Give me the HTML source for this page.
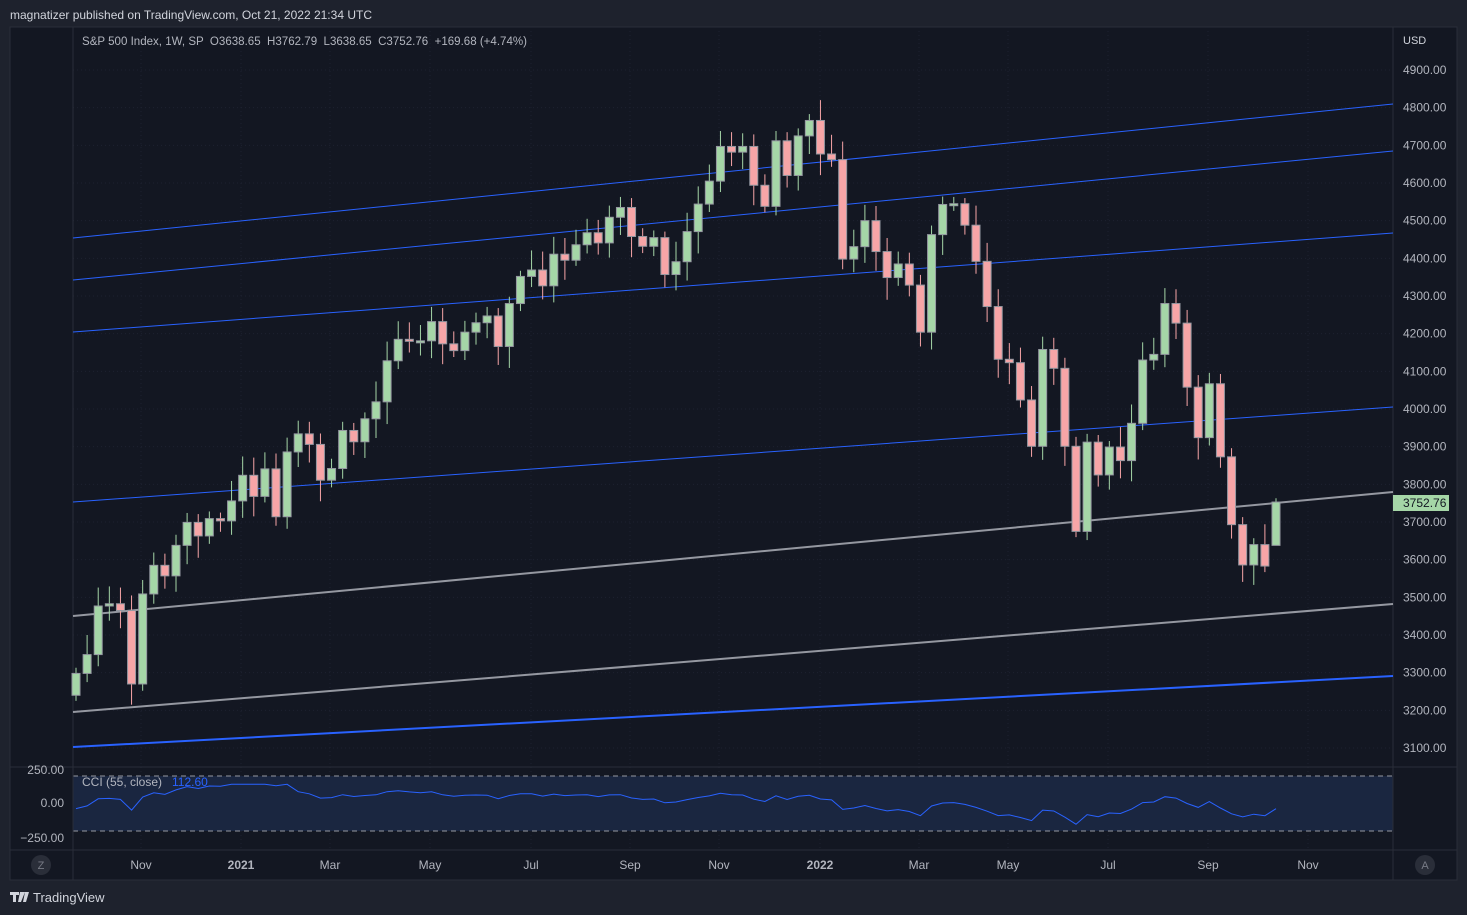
<!DOCTYPE html>
<html><head><meta charset="utf-8"><style>
html,body{margin:0;padding:0;background:#1e222d;width:1467px;height:915px;overflow:hidden;font-family:"Liberation Sans",sans-serif;}
svg{position:absolute;left:0;top:0}
</style></head><body>
<svg id="s" width="1467" height="915" xmlns="http://www.w3.org/2000/svg" font-family="Liberation Sans, sans-serif">
<rect x="0" y="0" width="1467" height="915" fill="#1e222d"/>
<text x="10" y="19" font-size="12" fill="#d1d4dc">magnatizer published on TradingView.com, Oct 21, 2022 21:34 UTC</text>
<rect x="10" y="27" width="1447" height="853" fill="#131722" stroke="#2a2e39"/>
<g id="grid"></g>
<rect x="73" y="776" width="1320" height="55" fill="#1a2640"/>
<line x1="73" y1="776" x2="1393" y2="776" stroke="#9598a1" stroke-dasharray="5,4" stroke-width="1"/>
<line x1="73" y1="831" x2="1393" y2="831" stroke="#9598a1" stroke-dasharray="5,4" stroke-width="1"/>
<line x1="73" y1="27" x2="73" y2="880" stroke="#2a2e39"/>
<line x1="1393" y1="27" x2="1393" y2="880" stroke="#2a2e39"/>
<line x1="10" y1="767" x2="1457" y2="767" stroke="#2a2e39"/>
<line x1="10" y1="850" x2="1457" y2="850" stroke="#2a2e39"/>
<g stroke-width="1">
<line x1="73" y1="238" x2="1393" y2="104" stroke="#2962ff"/>
<line x1="73" y1="280" x2="1393" y2="151" stroke="#2962ff"/>
<line x1="73" y1="332" x2="1393" y2="233" stroke="#2962ff"/>
<line x1="73" y1="502" x2="1393" y2="407" stroke="#2962ff"/>
<line x1="73" y1="616" x2="1393" y2="492" stroke="#9598a1" stroke-width="2"/>
<line x1="73" y1="712" x2="1393" y2="604" stroke="#9598a1" stroke-width="2"/>
<line x1="73" y1="747" x2="1393" y2="676" stroke="#2962ff" stroke-width="2"/>
</g>
<g id="candles"></g>
<polyline id="cci" fill="none" stroke="#2962ff" stroke-width="1"/>
<text x="82" y="45" font-size="11.5" fill="#b2b5be" xml:space="preserve" textLength="445" lengthAdjust="spacingAndGlyphs">S&amp;P 500 Index, 1W, SP  O3638.65  H3762.79  L3638.65  C3752.76  +169.68 (+4.74%)</text>
<text x="1403" y="44" font-size="11" fill="#d1d4dc">USD</text>
<g id="axis" font-size="12" fill="#b2b5be"></g>
<rect x="1393" y="495" width="56" height="16" fill="#a5d6a7"/>
<text x="1403" y="507" font-size="12" fill="#131722">3752.76</text>
<text x="82" y="786" font-size="12" fill="#b2b5be">CCI (55, close)</text>
<text x="172" y="786" font-size="12" fill="#2962ff">112.60</text>
<text x="64" y="774" font-size="12" fill="#b2b5be" text-anchor="end">250.00</text>
<text x="64" y="807" font-size="12" fill="#b2b5be" text-anchor="end">0.00</text>
<text x="64" y="842" font-size="12" fill="#b2b5be" text-anchor="end">−250.00</text>
<circle cx="41" cy="865" r="10" fill="#2a2e39"/><text x="41" y="869" font-size="11" fill="#787b86" text-anchor="middle">Z</text>
<circle cx="1425" cy="865" r="10" fill="#2a2e39"/><text x="1425" y="869" font-size="11" fill="#787b86" text-anchor="middle">A</text>
<g id="time" font-size="12" fill="#b2b5be" text-anchor="middle"></g>
<path d="M10 892h9v3h-3v7h-3v-7h-3z M20 892h5l-4 10h-3z M25 892h4l-3 10h-3z" fill="#d1d4dc"/>
<text x="33" y="902" font-size="13" fill="#d1d4dc">TradingView</text>
</svg>
<script>
var NS="http://www.w3.org/2000/svg";
function el(p,t,a,txt){var e=document.createElementNS(NS,t);for(var k in a)e.setAttribute(k,a[k]);if(txt!=null)e.textContent=txt;document.getElementById(p).appendChild(e);return e;}
function Y(p){return 70+(4900-p)*0.37667;}
for(var p=3100;p<=4900;p+=100){var y=Y(p);el('grid','line',{x1:73,y1:y,x2:1393,y2:y,stroke:'#1e2230','stroke-dasharray':'1,3'});el('axis','text',{x:1403,y:y+4},p.toFixed(2));}
var tl=[[141,'Nov'],[241,'2021'],[330,'Mar'],[430,'May'],[531,'Jul'],[630,'Sep'],[719,'Nov'],[820,'2022'],[919,'Mar'],[1008,'May'],[1108,'Jul'],[1208,'Sep'],[1308,'Nov']];
tl.forEach(function(t){el('grid','line',{x1:t[0],y1:27,x2:t[0],y2:850,stroke:'#1e2230','stroke-dasharray':'1,3'});el('time','text',{x:t[0],y:869,'font-weight':(t[1]=='2021'||t[1]=='2022')?'bold':'normal'},t[1]);});
var c=[3298,3348,3477,3483,3465,3270,3509,3585,3557,3638,3699,3663,3709,3703,3756,3824,3768,3841,3714,3886,3934,3906,3811,3842,3943,3913,3974,4019,4128,4185,4180,4181,4232,4173,4155,4204,4229,4247,4166,4280,4352,4369,4327,4411,4395,4436,4468,4441,4509,4535,4458,4432,4455,4357,4391,4471,4544,4605,4697,4682,4697,4594,4538,4712,4620,4725,4766,4677,4662,4398,4431,4500,4418,4349,4385,4329,4204,4463,4543,4545,4488,4392,4272,4132,4123,4024,3901,4158,4108,3901,3675,3912,3825,3899,3863,3962,4130,4145,4280,4228,4058,3924,4067,3873,3693,3586,3640,3583,3753];
var n=c.length,s=(1276-76)/(n-1),prev=3240,pts=[];
for(var i=0;i<n;i++){var o=(i==n-1)?3638:prev,cl=c[i],x=76+i*s;var hi=Math.max(o,cl)+15+((i*37)%40),lo=Math.min(o,cl)-15-((i*53)%45);if(i==n-1){hi=3763;lo=3638;}var up=cl>=o,col=up?'#a5d6a7':'#f7a5a7';
el('candles','line',{x1:x,y1:Y(hi),x2:x,y2:Y(lo),stroke:col});
var t=Y(Math.max(o,cl)),b=Y(Math.min(o,cl));if(b-t<2)b=t+2;
el('candles','rect',{x:x-4,y:t,width:8,height:b-t,fill:col,stroke:'#9598a1','stroke-width':1});prev=cl;
var v=0;if(i>=20){var m=0;for(var j=i-20;j<=i;j++)m+=c[j];m/=21;v=(cl-m)/3;}else v=(cl-3400)/2;
v=Math.max(-290,Math.min(170,v));pts.push(x.toFixed(1)+','+(803-v*0.11).toFixed(1));}
document.getElementById('cci').setAttribute('points',pts.join(' '));
</script>
</body></html>
